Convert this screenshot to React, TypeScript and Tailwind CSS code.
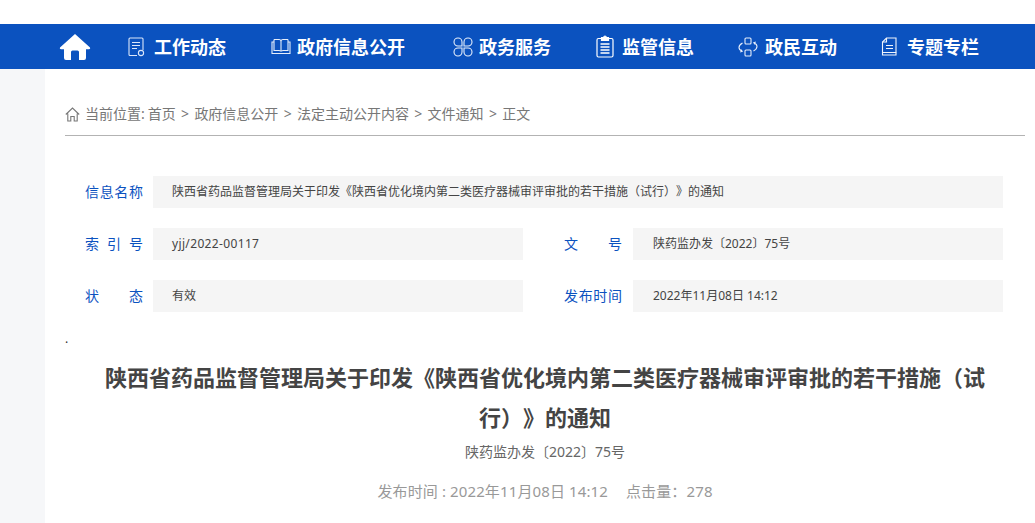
const FONT = "font-['Noto_Sans','Noto_Sans_CJK_SC',sans-serif] [text-spacing-trim:space-all]";

function HomeIcon() {
  return (
    <svg width="32" height="28" viewBox="0 0 32 28" fill="white">
      <path d="M16 1 L31 14.5 Q31.8 16 30 16.2 L27 16.2 L27 25 Q27 27 25 27 L20 27 L20 19 Q20 17.5 18.5 17.5 L13.500 17.500 Q12 17.500 12 19 L12 27 L7 27 Q5 27 5 25 L5 16.200 L2 16.200 Q0.200 16 1 14.500 Z" />
    </svg>
  );
}

function DocIcon() {
  return (
    <svg width="17" height="20" viewBox="0 0 17 20" fill="none" stroke="#dbe6fa" strokeWidth="1.1">
      <path d="M9 18.500 H2 Q1 18.500 1 17.500 V2 Q1 1 2 1 H14 Q15 1 15 2 V13" />
      <path d="M4 5.500 H12 M4 8.500 H12 M4 11.500 H9" />
      <circle cx="13" cy="16" r="2.600" />
    </svg>
  );
}

function BookIcon() {
  return (
    <svg width="20" height="17" viewBox="0 0 20 17" fill="none" stroke="#e6eefb" strokeWidth="1.1">
      <path d="M3 1.500 H8 Q10 1.500 10 3.500 V13 M17 1.500 H12 Q10 1.500 10 3.500" />
      <path d="M3 1.500 V12.500 H8 Q10 12.500 10 13.500 Q10 12.500 12 12.500 H17 V1.500" />
      <path d="M3 4 H1 V15.500 H19 V4 H17" />
    </svg>
  );
}

function CloverIcon() {
  return (
    <svg width="20" height="20" viewBox="0 0 20 20" fill="none" stroke="#e6eefb" strokeWidth="1.1">
      <path d="M9 9 H5 A4 4 0 1 1 9 5 Z" />
      <path d="M11 9 H15 A4 4 0 1 0 11 5 Z" />
      <path d="M9 11 H5 A4 4 0 1 0 9 15 Z" />
      <path d="M11 11 H15 A4 4 0 1 1 11 15 Z" />
    </svg>
  );
}

function ClipboardIcon() {
  return (
    <svg width="18" height="23" viewBox="0 0 18 23" fill="none" stroke="white" strokeWidth="1.200">
      <path d="M5 3.500 H2.500 Q1 3.500 1 5 V20.500 Q1 22 2.500 22 H15.500 Q17 22 17 20.500 V5 Q17 3.500 15.500 3.500 H13" />
      <path d="M5.500 5.500 V2.500 H7.500 Q8 1 9 1 Q10 1 10.500 2.500 H12.500 V5.500 Z" fill="white" />
      <path d="M4.500 9 H13.500 M4.500 12 H13.500 M4.500 15 H13.500 M4.500 18 H13.500" strokeWidth="1.300" />
    </svg>
  );
}

function ExchangeIcon() {
  return (
    <svg width="20" height="20" viewBox="0 0 20 20" fill="none" stroke="#e6eefb" strokeWidth="1.100">
      <rect x="7" y="1" width="6" height="6" rx="1" />
      <rect x="7" y="13" width="6" height="6" rx="1" />
      <path d="M4.500 6 Q1 8 1 10.500 Q1 13 4 14 M2.800 12.500 L4.200 14.300 L2.200 15" />
      <path d="M15.500 14 Q19 12 19 9.500 Q19 7 16 6 M17.200 7.500 L15.800 5.700 L17.800 5" />
    </svg>
  );
}

function PagesIcon() {
  return (
    <svg width="17" height="19" viewBox="0 0 17 19" fill="none" stroke="#f0f4fc" strokeWidth="1.100">
      <path d="M5.500 1 H15 V15.500 H1.500 V5 Z" />
      <path d="M5.500 1 V5 H1.500" />
      <path d="M1.500 15.500 V18 H15 V15.500" />
      <path d="M5 8.500 H12 M5 11.500 H12" />
    </svg>
  );
}

const NAV = [
  { label: '工作动态', icon: <DocIcon />, gap: 'ml-[37px] gap-[9px]' },
  { label: '政府信息公开', icon: <BookIcon />, gap: 'ml-[45px] gap-[6px]' },
  { label: '政务服务', icon: <CloverIcon />, gap: 'ml-[48px] gap-[6px]' },
  { label: '监管信息', icon: <ClipboardIcon />, gap: 'ml-[45px] gap-[8px]' },
  { label: '政民互动', icon: <ExchangeIcon />, gap: 'ml-[44px] gap-[7px]' },
  { label: '专题专栏', icon: <PagesIcon />, gap: 'ml-[44px] gap-[9px]' },
];

const CRUMBS = ['首页', '政府信息公开', '法定主动公开内容', '文件通知', '正文'];

function Label({ text }: { text: string }) {
  return <span className="w-[58px] flex justify-between text-sm text-[#0b52bf] shrink-0">{text.split(' ').map((c, i) => <span key={i}>{c}</span>)}</span>;
}

function Value({ text, className }: { text: string; className: string }) {
  return <div className={`h-8 bg-[#f5f5f5] flex items-center text-xs text-[#444] ${className}`}>{text}</div>;
}

export default function App() {
  return (
    <div className={`w-[1035px] h-[523px] overflow-hidden bg-white ${FONT}`}>
      <div className="h-6" />
      <nav className="h-[45px] bg-[#0b52bf] flex items-center pl-[59px] text-white text-lg font-bold">
        <HomeIcon />
        {NAV.map(item => (
          <div key={item.label} className={`flex items-center ${item.gap}`}>
            {item.icon}
            <span>{item.label}</span>
          </div>
        ))}
      </nav>
      <div className="flex">
        <div className="w-[45px] h-[454px] bg-[#f6f7f9] shrink-0" />
        <main className="flex-1 pl-5 pr-[10px]">
          <div className="h-[67px] border-b border-[#b3b3b3] flex items-end pb-[11px] text-sm text-[#777]">
            <div className="flex items-center">
              <svg width="15" height="15" viewBox="0 0 15 15" fill="none" stroke="#777" strokeWidth="1.100" className="mr-[5px]">
                <path d="M0.800 7.500 L7.500 1 L14.200 7.500 M2.800 6.500 V14 H5.800 V9.500 H9.200 V14 H12.200 V6.500" />
              </svg>
              <span>当前位置: </span>
              {CRUMBS.map((c, i) => (
                <span key={c} className={i === 0 ? 'ml-[3px]' : ''}>
                  {i > 0 && <span className="mx-[5.3px]">&gt;</span>}
                  {c}
                </span>
              ))}
            </div>
          </div>
          <div className="mt-10 pl-5 flex flex-col gap-5 w-[940px]">
            <div className="flex items-center gap-[10px]">
              <Label text="信 息 名 称" />
              <Value text="陕西省药品监督管理局关于印发《陕西省优化境内第二类医疗器械审评审批的若干措施（试行）》的通知" className="w-[850px] pl-[19px]" />
            </div>
            <div className="flex items-center gap-[10px]">
              <Label text="索 引 号" />
              <Value text="yjj/2022-00117" className="w-[370px] pl-[19px] tracking-[0.35px]" />
              <div className="ml-[31px]"><Label text="文 号" /></div>
              <Value text="陕药监办发〔2022〕75号" className="w-[370px] ml-[1px] pl-[20px]" />
            </div>
            <div className="flex items-center gap-[10px]">
              <Label text="状 态" />
              <Value text="有效" className="w-[370px] pl-[19px]" />
              <div className="ml-[31px]"><Label text="发 布 时 间" /></div>
              <Value text="2022年11月08日 14:12" className="w-[370px] ml-[1px] pl-[20px]" />
            </div>
          </div>
          <div className="h-[40px] text-xs text-[#333] leading-[27px] flex items-end">.</div>
          <h1 className="text-[22px] leading-10 font-bold text-[#444] text-center mt-[5px] px-5">
            陕西省药品监督管理局关于印发《陕西省优化境内第二类医疗器械审评审批的若干措施（试行）》的通知
          </h1>
          <p className="text-sm text-[#666] text-center mt-[5px]">陕药监办发〔2022〕75号</p>
          <p className="text-[15px] text-[#999] text-center mt-[18px] tracking-[0.12px]">
            发布时间 : 2022年11月08日 14:12<span className="ml-[18px]">点击量：278</span>
          </p>
        </main>
      </div>
    </div>
  );
}
